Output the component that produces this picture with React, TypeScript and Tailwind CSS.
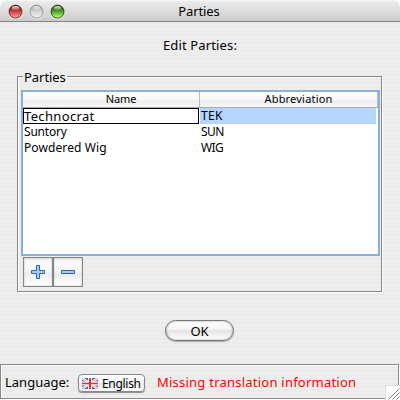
import React from "react";

const rows = [
  { name: "Suntory", abbr: "SUN" },
  { name: "Powdered Wig", abbr: "WIG" },
];

function Light({ id, dark, mid, glow }: { id: string; dark: string; mid: string; glow: string }) {
  return (
    <svg width="15" height="16" viewBox="0 0 15 16">
      <defs>
        <linearGradient id={id} x1="0" y1="0" x2="0" y2="1">
          <stop offset="0" stopColor={dark} />
          <stop offset="0.5" stopColor={mid} />
          <stop offset="1" stopColor={glow} />
        </linearGradient>
        <linearGradient id={id + "s"} x1="0" y1="0" x2="0" y2="1">
          <stop offset="0" stopColor="#fff" stopOpacity="0.85" />
          <stop offset="1" stopColor="#fff" stopOpacity="0.15" />
        </linearGradient>
      </defs>
      <circle cx="7.5" cy="8.6" r="7" fill="#f4f4f4" opacity="0.7" />
      <circle cx="7.5" cy="7.6" r="6.5" fill={`url(#${id})`} stroke={dark} strokeWidth="1" strokeOpacity="0.8" />
      <ellipse cx="7.5" cy="4.1" rx="3.8" ry="2" fill={`url(#${id}s)`} />
    </svg>
  );
}

function Flag() {
  return (
    <svg width="16" height="11" viewBox="0 0 16 11">
      <rect width="16" height="11" fill="#4464b4" />
      <path d="M0 0L16 11M16 0L0 11" stroke="#fff" strokeWidth="2.4" />
      <path d="M0 0L16 11M16 0L0 11" stroke="#e88086" strokeWidth="0.8" />
      <path d="M8 0V11M0 5.5H16" stroke="#fff" strokeWidth="4" />
      <path d="M8 0V11" stroke="#e0303a" strokeWidth="2" />
      <path d="M0 5.5H16" stroke="#e0303a" strokeWidth="1.6" />
    </svg>
  );
}

function ToolButton({ plus }: { plus?: boolean }) {
  return (
    <button className="flex h-[30px] w-[30px] items-center justify-center border border-[#858585] bg-[linear-gradient(#e9e9e9_0,#fbfbfb_4px,#f5f5f5_50%,#ececec_55%,#fff_100%)] shadow-[inset_0_0_2px_#bbb]">
      <svg width="14" height="14" viewBox="0 0 14 14">
        <path
          d={plus ? "M5.5 .5h3v5h5v3h-5v5h-3v-5h-5v-3h5z" : "M.5 5.5h13v3H.5z"}
          fill="#a9caec"
          stroke="#2f65ab"
        />
      </svg>
    </button>
  );
}

export default function App() {
  return (
    <div className="relative flex h-[400px] w-[400px] flex-col overflow-hidden bg-[repeating-linear-gradient(#eeeeee_0,#eeeeee_2px,#ebebeb_2px,#ebebeb_4px)] font-['Noto_Sans','Open_Sans',sans-serif] text-[13px] leading-4 text-black">
      <header className="h-[22px] shrink-0 bg-white">
        <div className="relative h-full rounded-t-[7px] border-b border-[#858585] bg-[linear-gradient(#fafafa_0,#e9e9e9_2px,#dedede_50%,#cbcbcb_100%)]">
          <div className="flex gap-[6px] pl-[7.5px] pt-[3.5px]">
            <Light id="red" dark="#5c1818" mid="#c9403d" glow="#ffaaa0" />
            <Light id="grey" dark="#8e8e8e" mid="#d4d4d4" glow="#efefef" />
            <Light id="green" dark="#123a08" mid="#4da322" glow="#cfff83" />
          </div>
          <div className="absolute inset-x-0 top-[3px] pr-[2px] text-center tracking-[-0.1px]">Parties</div>
        </div>
      </header>

      <h1 className="mt-[15px] h-4 text-center tracking-[0.15px]">Edit Parties:</h1>

      <fieldset className="relative ml-[17px] mt-[23px] h-[216px] w-[365px] border border-[#888] pl-[3px] pt-[13px] shadow-[1px_1px_0_#fff,inset_1px_1px_0_#fff]">
        <span className="absolute left-[5px] top-[-8px] bg-[#ededed] px-[1px] tracking-[-0.05px]">Parties</span>
        <div className="h-[166px] w-[359px] border-2 border-[#8ab0d8] bg-white text-xs leading-4">
          <div className="flex h-4 border-b border-[#aaa] bg-[linear-gradient(#fff_0,#f8f8f8_50%,#ececec_55%,#f8f8f8_100%)] text-center text-[11px] leading-[14px]">
            <div className="w-[177px] border-r border-[#bbb] pl-5 tracking-[-0.1px]">Name</div>
            <div className="w-[178px] border-r border-[#bbb] pl-5 tracking-[0.2px]">Abbreviation</div>
          </div>
          <div className="flex h-4">
            <div className="h-4 w-[176px] border border-black text-[13px] leading-[14px] tracking-[0.35px]">Technocrat</div>
            <div className="ml-px w-[176px] bg-[#b5d5ff] pl-px tracking-[0.3px]">TEK</div>
          </div>
          {rows.map((r) => (
            <div key={r.abbr} className="flex h-4">
              <div className={r.name === "Suntory" ? "w-[177px] pl-px tracking-[-0.2px]" : "w-[177px] pl-px tracking-[0.1px]"}>{r.name}</div>
              <div className="pl-px tracking-[-0.6px]">{r.abbr}</div>
            </div>
          ))}
        </div>
        <div className="flex pl-[2px] pt-px">
          <ToolButton plus />
          <ToolButton />
        </div>
      </fieldset>

      <button className="ml-[165px] mt-[28px] h-[21px] w-[69px] shrink-0 rounded-full border border-[#777] bg-[linear-gradient(#fff_0,#f4f4f4_45%,#e4e4e4_50%,#fff_100%)] leading-[18px] shadow-[0_1px_1px_#aaa,inset_0_0_2px_#888]">
        OK
      </button>

      <footer className="mt-[23px] flex h-[35px] w-[399px] shrink-0 items-center border border-[#888] pl-1 shadow-[1px_1px_0_#fff,inset_1px_1px_0_#fff]">
        <span className="w-[73px]">Language:</span>
        <button className="mt-[3px] flex h-[18px] w-[67px] items-center gap-1 rounded-[4px] border border-[#888] bg-[linear-gradient(#fff,#f5f5f5_50%,#e9e9e9_55%,#fafafa)] pl-[3px] text-xs shadow-[0_1px_1px_#888]">
          <Flag />
          <span className="relative top-px tracking-[-0.3px]">English</span>
        </button>
        <span className="ml-3 whitespace-nowrap tracking-[0.23px] text-[#ff0000]">Missing translation information</span>
      </footer>

      <svg className="absolute bottom-0 right-0" width="15" height="15" viewBox="0 0 15 15">
        <rect width="15" height="15" fill="#fff" />
        <path d="M0 .5H15M.5 0V15" stroke="#ddd" />
        <path d="M3.5 14.5L14.5 3.5M7.5 14.5L14.5 7.5M11.5 14.5L14.5 11.5" stroke="#777" />
      </svg>
    </div>
  );
}
